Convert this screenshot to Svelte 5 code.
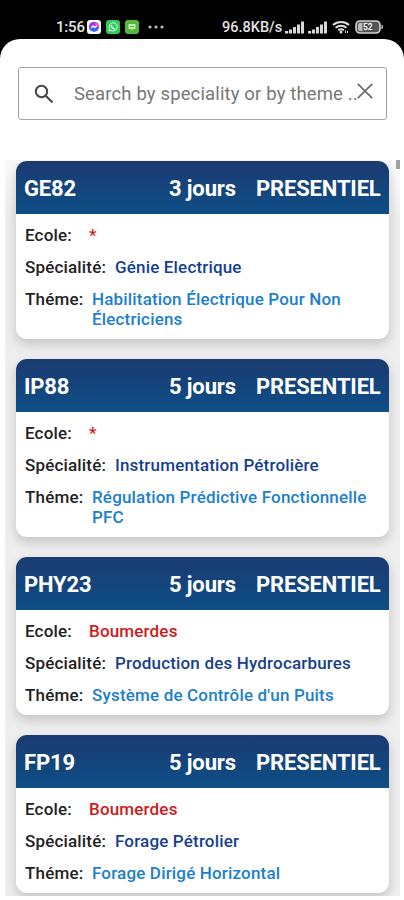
<script lang="ts">
  interface Course {
    code: string;
    days: number;
    mode: string;
    school: string;
    speciality: string;
    theme: string;
  }

  const courses: Course[] = [
    {
      code: "GE82",
      days: 3,
      mode: "PRESENTIEL",
      school: "*",
      speciality: "Génie Electrique",
      theme: "Habilitation Électrique Pour Non Électriciens"
    },
    {
      code: "IP88",
      days: 5,
      mode: "PRESENTIEL",
      school: "*",
      speciality: "Instrumentation Pétrolière",
      theme: "Régulation Prédictive Fonctionnelle PFC"
    },
    {
      code: "PHY23",
      days: 5,
      mode: "PRESENTIEL",
      school: "Boumerdes",
      speciality: "Production des Hydrocarbures",
      theme: "Système de Contrôle d'un Puits"
    },
    {
      code: "FP19",
      days: 5,
      mode: "PRESENTIEL",
      school: "Boumerdes",
      speciality: "Forage Pétrolier",
      theme: "Forage Dirigé Horizontal"
    }
  ];

  const signals = [1, 2];

  let query = $state("");
</script>

<div class="phone">
  <div class="status-bar">
    <div class="status-left">
      <span class="clock">1:56</span>
      <svg class="app-icon" viewBox="0 0 14 14">
        <rect width="14" height="14" rx="3" fill="#fff" />
        <circle cx="7" cy="6.8" r="5" fill="#8a3df0" />
        <path d="M2.2 8a5 5 0 0 0 9.6 0z" fill="#2f6df6" />
        <path d="M7 1.8a5 5 0 0 1 5 5h-3z" fill="#f0569b" />
        <path d="M4.2 8l2-2 1.6 1.4 2-1.6" fill="none" stroke="#fff" stroke-width="1.3" />
      </svg>
      <svg class="app-icon" viewBox="0 0 14 14">
        <rect width="14" height="14" rx="3" fill="#2fcb5b" />
        <path
          d="M3 11l.6-2.2A4.1 4.1 0 1 1 5.2 10.4z"
          fill="none"
          stroke="#e9ffef"
          stroke-width="1"
        />
        <path d="M5.4 5c0 2 1.6 3.6 3.6 3.8" fill="none" stroke="#e9ffef" stroke-width="1.3" />
      </svg>
      <svg class="app-icon" viewBox="0 0 14 14">
        <rect width="14" height="14" rx="3" fill="#55b83a" />
        <path d="M3.5 4h7v5H8l-1 1.3L6 9H3.5z" fill="#c4eab4" />
        <path d="M5 6.5h4" stroke="#55b83a" />
      </svg>
      <svg class="more" viewBox="0 0 16 4">
        <circle cx="2" cy="2" r="1.6" />
        <circle cx="8" cy="2" r="1.6" />
        <circle cx="14" cy="2" r="1.6" />
      </svg>
    </div>
    <div class="status-right">
      <span class="speed">96.8KB/s</span>
      {#each signals as signal (signal)}
        <svg class="signal" viewBox="0 0 20 13">
          <path d="M0 10h3.200v2.500H0zM4 8.500h3v4H4zM8 6h3v6.500H8zM12 3.500h3v9h-3zM16 .500h3v12h-3z" />
        </svg>
      {/each}
      <svg class="wifi" viewBox="0 0 18 14">
        <path d="M1 5a12 12 0 0 1 16 0M3.600 7.800a8 8 0 0 1 10.800 0M6.200 10.300a4.500 4.500 0 0 1 5.600 0" />
        <circle cx="9" cy="12" r="1.500" />
        <path d="M13.500 10.500v2.500M15.500 11v2" class="thin" />
      </svg>
      <svg class="battery" viewBox="0 0 29 14">
        <rect x="1" y="1" width="24" height="12" rx="4" fill="#555" stroke="#d2d2d2" stroke-width="1.600" />
        <rect x="3" y="3" width="14" height="8" rx="2" fill="#bbb" />
        <path d="M26.500 4.500c2 1 2 4 0 5z" fill="#d2d2d2" />
        <rect x="7.500" y="3.200" width="10.500" height="7.600" fill="#444" />
        <text x="12.800" y="10.200" text-anchor="middle">52</text>
      </svg>
    </div>
  </div>

  <main class="sheet">
    <label class="search">
      <svg class="search-icon" viewBox="0 0 20 20">
        <circle cx="7.500" cy="7.500" r="5.700" />
        <path d="M11.700 11.700l6.800 6.800" />
      </svg>
      <input type="text" placeholder="Search by speciality or by theme ..." bind:value={query} />
      <button class="clear" aria-label="Clear search" onclick={() => (query = "")}>
        <svg viewBox="0 0 16 16"><path d="M.8.8l14.400 14.400M15.200.8L.8 15.200" /></svg>
      </button>
    </label>

    <div class="results">
      <div class="course-list">
        {#each courses as course (course.code)}
          <article class="course">
            <header>
              <span class="code">{course.code}</span>
              <span class="days">{course.days} jours</span>
              <span class="mode">{course.mode}</span>
            </header>
            <div class="details">
              <div class="row">
                <span class="label school-label">Ecole:</span>
                <span class="school">{course.school}</span>
              </div>
              <div class="row">
                <span class="label speciality-label">Spécialité:</span>
                <span class="speciality">{course.speciality}</span>
              </div>
              <div class="row">
                <span class="label theme-label">Théme:</span>
                <span class="theme">{course.theme}</span>
              </div>
            </div>
          </article>
        {/each}
      </div>
      <div class="scrollbar"></div>
    </div>
  </main>
</div>

<style>
  :global(body) {
    background: #000;
    overflow: hidden;
  }

  .phone {
    display: flex;
    flex-direction: column;
    width: 404px;
    height: 900px;
    background: #000;
    font-family: Roboto, "Liberation Sans", sans-serif;
  }

  .status-bar {
    display: flex;
    justify-content: space-between;
    box-sizing: border-box;
    height: 39px;
    padding: 17px 20px 0 56px;
    color: #e4e4e4;
  }

  .status-left,
  .status-right {
    display: flex;
    align-items: center;
    height: 20px;
  }

  .clock {
    width: 31px;
    font-size: 15px;
    font-weight: 500;
    letter-spacing: -0.2px;
    white-space: nowrap;
  }

  .app-icon {
    width: 14px;
    height: 14px;
    margin-right: 5px;
  }

  .more {
    width: 16px;
    height: 4px;
    margin-left: 4px;
    fill: #bbb;
  }

  .speed {
    width: 63px;
    font-size: 14.5px;
    font-weight: 500;
    white-space: nowrap;
  }

  .signal {
    width: 20px;
    height: 13px;
    margin-right: 3px;
    fill: #d8d8d8;
  }

  .wifi {
    width: 18px;
    height: 14px;
    margin: 0 5px 0 1px;
    fill: #ddd;
  }

  .wifi path {
    fill: none;
    stroke: #ddd;
    stroke-width: 2;
  }

  .wifi .thin {
    stroke-width: 1;
  }

  .battery {
    width: 29px;
    height: 14px;
  }

  .battery text {
    fill: #fff;
    font-size: 8.5px;
    font-weight: 700;
  }

  .sheet {
    flex: 1;
    display: flex;
    flex-direction: column;
    min-height: 0;
    background: #fff;
    border-radius: 20px 20px 0 0;
  }

  .search {
    display: flex;
    align-items: center;
    box-sizing: border-box;
    height: 53px;
    margin: 28px 17px 40px 18px;
    padding: 0 13px 0 15px;
    border: 1px solid #a3a3a3;
    border-radius: 3px;
  }

  .search-icon {
    flex: none;
    width: 20px;
    height: 20px;
    fill: none;
    stroke: #444;
    stroke-width: 2;
  }

  .search input {
    flex: 1;
    min-width: 0;
    margin-left: 20px;
    padding: 0;
    border: 0;
    outline: 0;
    background: none;
    font-family: inherit;
    font-size: 18.5px;
    letter-spacing: 0.14px;
    color: #444;
  }

  .search input::placeholder {
    color: #777;
    opacity: 1;
  }

  .clear {
    flex: none;
    width: 16px;
    height: 16px;
    margin-bottom: 5px;
    padding: 0;
    border: 0;
    background: none;
  }

  .clear svg {
    display: block;
    fill: none;
    stroke: #6c6c6c;
    stroke-width: 1.7;
  }

  .results {
    display: flex;
    height: 736px;
    margin: 0 4px 0 5px;
    background: linear-gradient(#fafafa, #eee 60px);
  }

  .course-list {
    display: flex;
    flex-direction: column;
    gap: 20px;
    box-sizing: border-box;
    width: 391px;
    padding: 1px 7px 0 11px;
    overflow: hidden;
  }

  .scrollbar {
    width: 4px;
    height: 9px;
    background: #a0a0a0;
  }

  .course {
    border-radius: 11px;
    background: #fff;
    box-shadow: 0 5px 12px rgba(0, 0, 0, 0.18);
  }

  .course header {
    display: flex;
    align-items: center;
    height: 53px;
    padding: 2px 8px 0 8px;
    border-radius: 11px 11px 0 0;
    background: linear-gradient(#1b3a72, #0e4e86);
    box-sizing: border-box;
    color: #fff;
    font-size: 22px;
    font-weight: 700;
    letter-spacing: -0.15px;
    white-space: nowrap;
  }

  .code {
    flex: 1;
  }

  .days {
    width: 87px;
  }

  .mode {
    width: 125px;
  }

  .details {
    display: flex;
    flex-direction: column;
    gap: 12px;
    padding: 11px 9px 10px;
    font-size: 17px;
    font-weight: 500;
    letter-spacing: 0.17px;
    line-height: 20px;
  }

  .row {
    display: flex;
  }

  .label {
    flex: none;
    color: #222;
  }

  .school-label {
    width: 64px;
  }

  .speciality-label {
    width: 90px;
  }

  .theme-label {
    width: 67px;
  }

  .school {
    color: #cf1a20;
  }

  .speciality {
    color: #173f8f;
  }

  .theme {
    color: #1c7fcd;
  }
</style>
